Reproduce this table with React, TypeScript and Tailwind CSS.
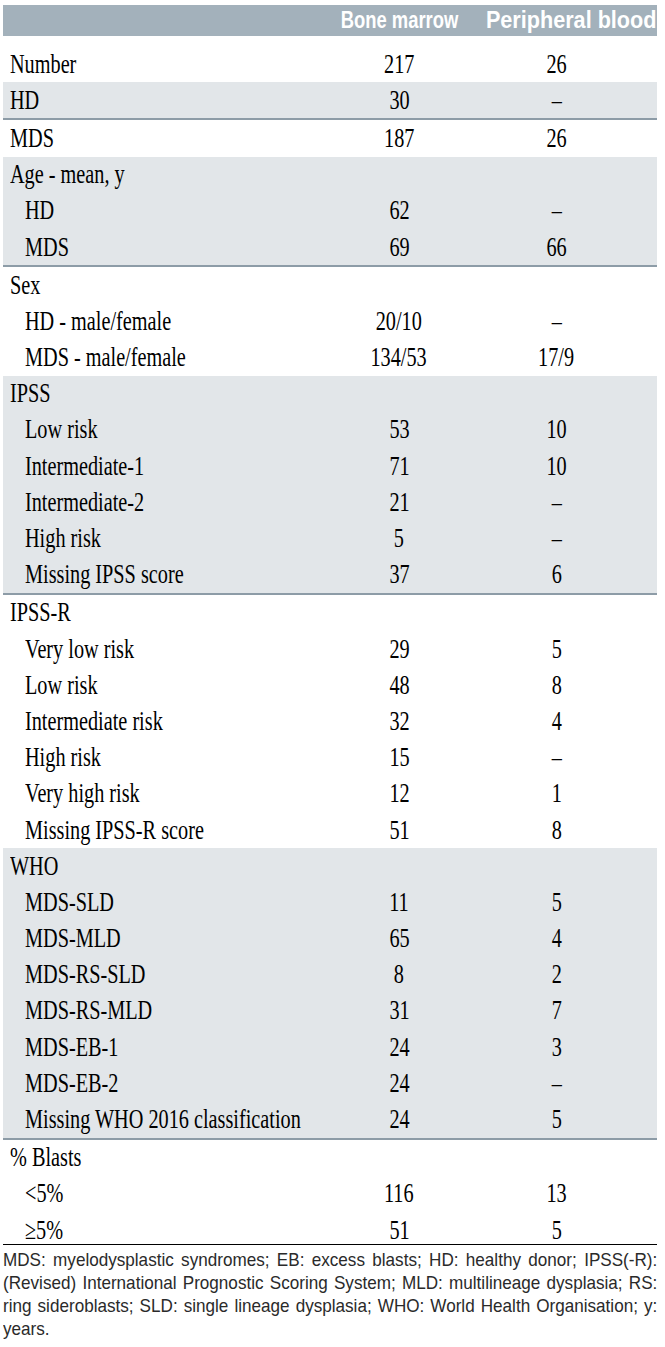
import type { ReactNode } from "react";

type Cell = string;

interface RowData {
  label: string;
  bm?: Cell;
  pb?: Cell;
  sub?: boolean;
}

interface Group {
  shaded: boolean;
  rows: RowData[];
}

const GROUPS: Group[] = [
  { shaded: false, rows: [{ label: "Number", bm: "217", pb: "26" }] },
  { shaded: true, rows: [{ label: "HD", bm: "30", pb: "–" }] },
  { shaded: false, rows: [{ label: "MDS", bm: "187", pb: "26" }] },
  {
    shaded: true,
    rows: [
      { label: "Age - mean, y" },
      { label: "HD", bm: "62", pb: "–", sub: true },
      { label: "MDS", bm: "69", pb: "66", sub: true },
    ],
  },
  {
    shaded: false,
    rows: [
      { label: "Sex" },
      { label: "HD - male/female", bm: "20/10", pb: "–", sub: true },
      { label: "MDS - male/female", bm: "134/53", pb: "17/9", sub: true },
    ],
  },
  {
    shaded: true,
    rows: [
      { label: "IPSS" },
      { label: "Low risk", bm: "53", pb: "10", sub: true },
      { label: "Intermediate-1", bm: "71", pb: "10", sub: true },
      { label: "Intermediate-2", bm: "21", pb: "–", sub: true },
      { label: "High risk", bm: "5", pb: "–", sub: true },
      { label: "Missing IPSS score", bm: "37", pb: "6", sub: true },
    ],
  },
  {
    shaded: false,
    rows: [
      { label: "IPSS-R" },
      { label: "Very low risk", bm: "29", pb: "5", sub: true },
      { label: "Low risk", bm: "48", pb: "8", sub: true },
      { label: "Intermediate risk", bm: "32", pb: "4", sub: true },
      { label: "High risk", bm: "15", pb: "–", sub: true },
      { label: "Very high risk", bm: "12", pb: "1", sub: true },
      { label: "Missing IPSS-R score", bm: "51", pb: "8", sub: true },
    ],
  },
  {
    shaded: true,
    rows: [
      { label: "WHO" },
      { label: "MDS-SLD", bm: "11", pb: "5", sub: true },
      { label: "MDS-MLD", bm: "65", pb: "4", sub: true },
      { label: "MDS-RS-SLD", bm: "8", pb: "2", sub: true },
      { label: "MDS-RS-MLD", bm: "31", pb: "7", sub: true },
      { label: "MDS-EB-1", bm: "24", pb: "3", sub: true },
      { label: "MDS-EB-2", bm: "24", pb: "–", sub: true },
      { label: "Missing WHO 2016 classification", bm: "24", pb: "5", sub: true },
    ],
  },
  {
    shaded: false,
    rows: [
      { label: "% Blasts" },
      { label: "<5%", bm: "116", pb: "13", sub: true },
      { label: "≥5%", bm: "51", pb: "5", sub: true },
    ],
  },
];

const FOOTNOTE = [
  "MDS: myelodysplastic syndromes; EB: excess blasts; HD: healthy donor; IPSS(-R):",
  "(Revised) International Prognostic Scoring System; MLD: multilineage dysplasia; RS:",
  "ring sideroblasts; SLD: single lineage dysplasia; WHO: World Health Organisation; y:",
];

function Narrow({ children, origin }: { children: ReactNode; origin: string }) {
  return (
    <span className={`inline-block whitespace-nowrap scale-x-[0.75] ${origin}`}>
      {children}
    </span>
  );
}

function Row({ row }: { row: RowData }) {
  return (
    <div className="grid grid-cols-[337px_118px_199px] h-[36.2px] items-center text-[27px] leading-none">
      <div className={row.sub ? "pl-[22px]" : "pl-[7px]"}>
        <Narrow origin="origin-left">{row.label}</Narrow>
      </div>
      <div className="flex justify-center">
        {row.bm && <Narrow origin="origin-center">{row.bm}</Narrow>}
      </div>
      <div className="flex justify-center pr-[2px]">
        {row.pb && <Narrow origin="origin-center">{row.pb}</Narrow>}
      </div>
    </div>
  );
}

export default function App() {
  return (
    <div className="w-[665px] min-h-[1347px] bg-white pt-[5px] px-[3px] overflow-hidden">
      <div className="w-[654px] font-['Liberation_Serif',serif] text-black">
        {/* Header */}
        <div className="grid grid-cols-[337px_118px_199px] h-[31px] items-center bg-[#a3b1bb] text-white font-['Liberation_Sans',sans-serif] font-bold text-[23px] leading-none">
          <div />
          <div className="flex justify-center">
            <span className="inline-block shrink-0 whitespace-nowrap scale-x-[0.8] origin-center">
              Bone marrow
            </span>
          </div>
          <div className="flex justify-end pr-[1px]">
            <span className="inline-block shrink-0 whitespace-nowrap scale-x-[0.94] origin-right">
              Peripheral blood
            </span>
          </div>
        </div>

        <div className="h-[10px]" />

        {GROUPS.map((g, i) => (
          <div
            key={i}
            className={
              g.shaded ? "bg-[#e2e6e9] border-b-2 border-[#8d9ca7]" : ""
            }
          >
            {g.rows.map((r, j) => (
              <Row key={j} row={r} />
            ))}
          </div>
        ))}

        <div className="border-b border-black mt-[-4px]" />

        {/* Footnote */}
        <div className="pt-[3px] overflow-hidden">
          <div className="w-[727px] scale-x-[0.9] origin-left font-['Liberation_Sans',sans-serif] text-[19px] leading-[23px] text-[#2a2a2a]">
            {FOOTNOTE.map((line, i) => (
              <div key={i} className="text-justify [text-align-last:justify]">
                {line}
              </div>
            ))}
            <div>years.</div>
          </div>
        </div>
      </div>
    </div>
  );
}
